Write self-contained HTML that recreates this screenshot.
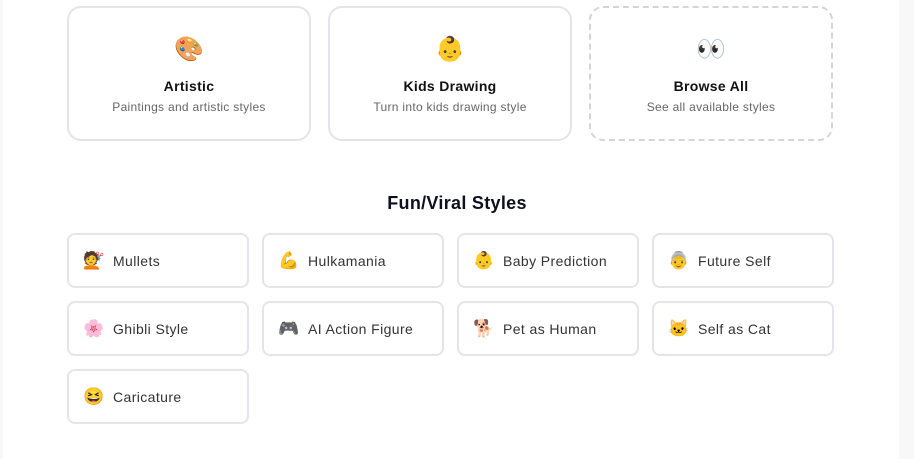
<!DOCTYPE html>
<html><head><meta charset="utf-8"><style>
*{box-sizing:border-box;margin:0;padding:0}
body{width:914px;height:459px;background:#f8f8f9;font-family:"Liberation Sans","Noto Sans CJK SC",sans-serif;overflow:hidden;position:relative}
.main{position:absolute;left:3px;top:0;width:896px;height:459px;background:#fff}
.big{position:absolute;top:6px;width:244px;height:135px;border:2px solid #e4e4ea;border-radius:14px;text-align:center}
.big.d{border:2px dashed #d4d4da}
.big .i{position:absolute;top:28px;left:0;right:0;font-size:24px;line-height:28px}
.big .t{position:absolute;top:70px;left:0;right:0;font-size:14px;font-weight:bold;color:#111;letter-spacing:0.3px}
.big .s{position:absolute;top:92px;left:0;right:0;font-size:12px;color:#666;letter-spacing:0.3px}
h2{position:absolute;top:193px;left:0;width:914px;text-align:center;font-size:18px;font-weight:bold;color:#0d1020;letter-spacing:0.3px}
.c{position:absolute;width:182px;height:55px;border:2px solid #e4e4ea;border-radius:8px;font-size:14px;color:#333;letter-spacing:0.4px}
.c .i{position:absolute;left:14px;top:16px;font-size:17px;line-height:20px}
.c .t{position:absolute;left:44px;top:18px}
</style></head><body>
<div class="main"></div>
<div class="big" style="left:67px"><div class="i">🎨</div><div class="t">Artistic</div><div class="s">Paintings and artistic styles</div></div>
<div class="big" style="left:328px"><div class="i">👶</div><div class="t">Kids Drawing</div><div class="s">Turn into kids drawing style</div></div>
<div class="big d" style="left:589px"><div class="i">👀</div><div class="t">Browse All</div><div class="s">See all available styles</div></div>
<h2>Fun/Viral Styles</h2>
<div class="c" style="left:67px;top:233px"><span class="i">💇</span><span class="t">Mullets</span></div>
<div class="c" style="left:262px;top:233px"><span class="i">💪</span><span class="t">Hulkamania</span></div>
<div class="c" style="left:457px;top:233px"><span class="i">👶</span><span class="t">Baby Prediction</span></div>
<div class="c" style="left:652px;top:233px"><span class="i">👵</span><span class="t">Future Self</span></div>
<div class="c" style="left:67px;top:301px"><span class="i">🌸</span><span class="t">Ghibli Style</span></div>
<div class="c" style="left:262px;top:301px"><span class="i">🎮</span><span class="t">AI Action Figure</span></div>
<div class="c" style="left:457px;top:301px"><span class="i">🐕</span><span class="t">Pet as Human</span></div>
<div class="c" style="left:652px;top:301px"><span class="i">🐱</span><span class="t">Self as Cat</span></div>
<div class="c" style="left:67px;top:369px"><span class="i">😆</span><span class="t">Caricature</span></div>
</body></html>
